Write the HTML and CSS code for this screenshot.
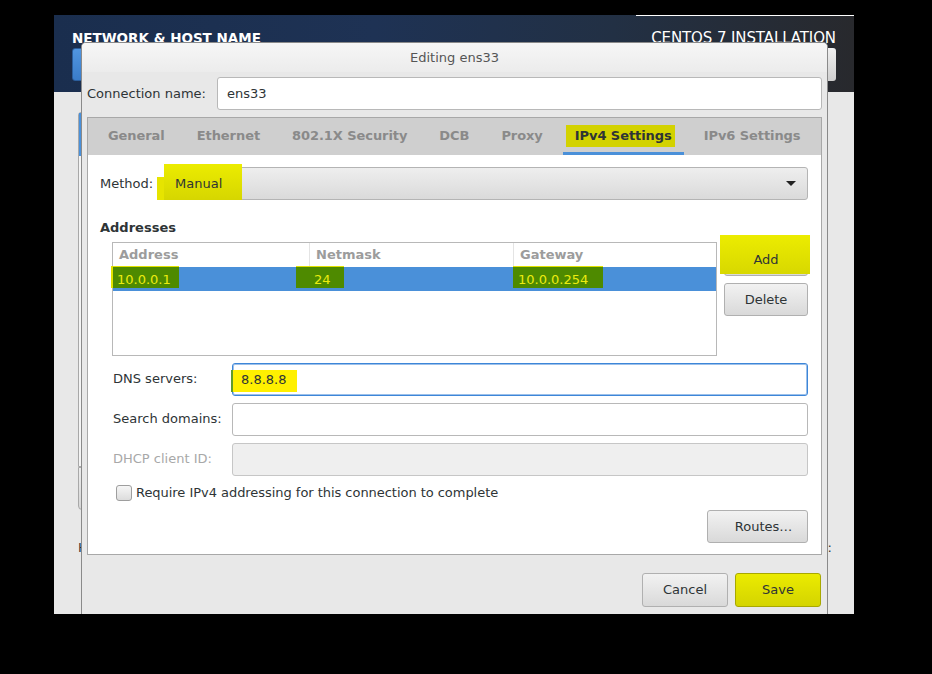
FILE: index.html
```html
<!DOCTYPE html>
<html lang="en">
  <head>
    <meta charset="UTF-8" />
    <meta name="viewport" content="width=device-width, initial-scale=1.0" />
    <title>Editing ens33</title>
    <link rel="stylesheet" href="styles.css">
  </head>
  <body>
    <div class="screen">
      <div class="topbar">
        <div class="spoke_head">
          <div class="spoke_title">NETWORK &amp; HOST NAME</div>
          <div class="done_btn"></div>
        </div>
        <div class="product">
          <div class="product_name">CENTOS 7 INSTALLATION</div>
          <div class="kb_btn"></div>
        </div>
      </div>

      <div class="spoke">
        <div class="device_list">
          <div class="device_sel"></div>
        </div>
        <div class="list_btn"></div>
        <div class="host_row">
          <span>Host name:</span>
          <span>Current host name:</span>
        </div>
      </div>

      <!-- dialog window sits over the spoke -->
      <div class="dialog">
        <div class="titlebar">Editing ens33</div>
        <div class="dlg_body">
          <div class="conn_row">
            <label>Connection name:</label>
            <div class="entry">ens33</div>
          </div>

          <div class="notebook">
            <ul class="tabs">
              <li class="tab">General</li>
              <li class="tab">Ethernet</li>
              <li class="tab">802.1X Security</li>
              <li class="tab">DCB</li>
              <li class="tab">Proxy</li>
              <li class="tab active"><span class="hl_tab">IPv4 Settings</span></li>
              <li class="tab">IPv6 Settings</li>
            </ul>

            <div class="tab_page">
              <div class="method_row">
                <label>Method:</label>
                <div class="combo">
                  <span class="hl_method">Manual</span>
                  <span class="arrow"></span>
                </div>
              </div>

              <h4 class="section_title">Addresses</h4>
              <div class="addr_block">
                <div class="addr_table">
                  <div class="thead">
                    <div class="th c1">Address</div>
                    <div class="th c2">Netmask</div>
                    <div class="th c3">Gateway</div>
                  </div>
                  <div class="trow selected">
                    <div class="c1"><span class="mk mk1">10.0.0.1</span></div>
                    <div class="c2"><span class="mk mk2">24</span></div>
                    <div class="c3"><span class="mk mk3">10.0.0.254</span></div>
                  </div>
                </div>
                <div class="addr_btns">
                  <button class="btn hl">Add</button>
                  <button class="btn">Delete</button>
                </div>
              </div>

              <div class="ip_fields">
                <label>DNS servers:</label>
                <div class="entry focus"><span class="hl_dns">8.8.8.8</span></div>
                <label>Search domains:</label>
                <div class="entry"></div>
                <label class="dim">DHCP client ID:</label>
                <div class="entry disabled"></div>
              </div>

              <div class="check_row">
                <span class="checkbox"></span>
                <span>Require IPv4 addressing for this connection to complete</span>
              </div>

              <div class="routes_row">
                <button class="btn routes">Routes…</button>
              </div>
            </div>
          </div>

          <div class="dlg_actions">
            <button class="btn">Cancel</button>
            <button class="btn save">Save</button>
          </div>
        </div>
      </div>
    </div>
  </body>
</html>
```

FILE: styles.css
```css
* {
  margin: 0;
  padding: 0;
  box-sizing: border-box;
}
li {
  list-style: none;
}
body {
  background: #000;
  width: 932px;
  height: 674px;
  overflow: hidden;
  font-family: "DejaVu Sans", "Liberation Sans", sans-serif;
  font-size: 13px;
  line-height: 16px;
  color: #2e3436;
}
button {
  font: inherit;
  color: inherit;
}

/* installer screen behind the dialog */
.screen {
  position: relative;
  width: 800px;
  height: 599px;
  margin: 15px 0 0 54px;
  background: #e8e8e8;
}
.topbar {
  position: relative;
  height: 77px;
  padding: 14px 18px 0;
  display: flex;
  justify-content: space-between;
  color: #fff;
  background: linear-gradient(90deg, #1a2e4e 0%, #1e3254 40%, #223044 70%, #28292d 100%);
}
.topbar::before {
  content: "";
  position: absolute;
  top: 0;
  right: 0;
  width: 218px;
  height: 1px;
  background: #fff;
}
.spoke_title {
  font-size: 13.5px;
  font-weight: bold;
  line-height: 18px;
}
.done_btn {
  width: 90px;
  height: 33px;
  margin-top: 1px;
  border-radius: 3px;
  border: 1px solid #2b5e9c;
  background: linear-gradient(#5196e0, #3a7cc8);
}
.product {
  display: flex;
  flex-direction: column;
  align-items: flex-end;
}
.product_name {
  font-size: 15px;
  line-height: 18px;
  letter-spacing: -0.1px;
}
.kb_btn {
  width: 70px;
  height: 33px;
  margin-top: 1px;
  border-radius: 3px;
  background: linear-gradient(#f0f0f0, #cfcfcf);
}
.spoke {
  height: 522px;
  padding: 20px 22px 0 24px;
}
.device_list {
  width: 300px;
  height: 355px;
  border: 1px solid #a8a8a8;
  border-radius: 3px 0 0 0;
  background: #f4f4f4;
}
.device_sel {
  height: 43px;
  background: #4a90d9;
}
.list_btn {
  width: 44px;
  height: 43px;
  border: 1px solid #a8a8a8;
  border-radius: 0 0 0 4px;
  background: linear-gradient(#ececec, #d6d6d6);
}
.host_row {
  margin-top: 30px;
  display: flex;
  justify-content: space-between;
}

/* dialog */
.dialog {
  position: absolute;
  left: 27px;
  top: 27px;
  width: 747px;
  height: 572px;
  display: flex;
  flex-direction: column;
  background: #e8e8e8;
  border: 1px solid #8a8a8a;
  border-bottom: 0;
  border-radius: 5px 5px 0 0;
}
.titlebar {
  height: 29px;
  line-height: 29px;
  text-align: center;
  color: #555;
  border-radius: 4px 4px 0 0;
  background: linear-gradient(#f6f6f6, #ececec);
}
.dlg_body {
  flex: 1;
  padding: 5px 5px 0;
}
.conn_row {
  display: flex;
  align-items: center;
  height: 33px;
}
.conn_row label {
  width: 130px;
}
.entry {
  flex: 1;
  height: 33px;
  padding-left: 9px;
  display: flex;
  align-items: center;
  background: #fff;
  border: 1px solid #b8b8b8;
  border-radius: 3px;
}
.entry.focus {
  padding-left: 8px;
  border-color: #3d86d8;
  box-shadow: inset 0 0 0 1px #9cc0ea;
}
.entry.disabled {
  background: #efefef;
  border-color: #c6c6c6;
}

.notebook {
  margin-top: 7px;
  height: 438px;
  display: flex;
  flex-direction: column;
  background: #fff;
  border: 1px solid #a8a8a8;
}
.tabs {
  height: 37px;
  padding-left: 8px;
  display: flex;
  gap: 8px;
  background: #cfcfcf;
}
.tab {
  padding: 0 12px;
  line-height: 35px;
  font-weight: bold;
  letter-spacing: -0.07px;
  color: #8a8a8a;
}
.tab.active {
  color: #2e3436;
  box-shadow: inset 0 -3px 0 #4a90d9;
}
.hl_tab {
  margin: 0 -3px 0 -9px;
  padding: 3px 3px 4px 9px;
  background: #d3d200;
}
.tab_page {
  flex: 1;
  padding: 12px 13px 0 12px;
}
.method_row {
  display: flex;
  align-items: center;
  height: 33px;
}
.method_row label {
  width: 64px;
}
.combo {
  flex: 1;
  height: 33px;
  padding: 0 11px 0 10px;
  display: flex;
  align-items: center;
  justify-content: space-between;
  border: 1px solid #b4b4b4;
  border-radius: 3px;
  background: linear-gradient(#eeeeee, #dadada);
}
.hl_method {
  position: relative;
  align-self: stretch;
  width: 78px;
  margin: -4px 0 -1px -11px;
  padding: 3px 0 0 11px;
  display: flex;
  align-items: center;
  background: linear-gradient(#ecec00, #d6d600);
}
.hl_method::before {
  content: "";
  position: absolute;
  left: -7px;
  top: 13px;
  bottom: 0;
  width: 7px;
  background: #e6e400;
}
.arrow {
  width: 0;
  height: 0;
  border-left: 5px solid transparent;
  border-right: 5px solid transparent;
  border-top: 5px solid #222;
}
.section_title {
  margin-top: 20px;
  font-size: 13px;
  line-height: 16px;
}
.addr_block {
  margin: 6px 0 0 12px;
  display: flex;
  gap: 7px;
}
.addr_table {
  flex: 1;
  height: 114px;
  background: #fff;
  border: 1px solid #b8b8b8;
}
.thead,
.trow {
  display: flex;
  height: 24px;
}
.th {
  padding-left: 6px;
  line-height: 24px;
  font-weight: bold;
  color: #9c9c9c;
  border-right: 1px solid #e4e4e4;
}
.th.c3 {
  border-right: 0;
}
.c1 {
  width: 197px;
}
.c2 {
  width: 204px;
}
.c3 {
  flex: 1;
}
.trow.selected {
  background: #4a90d9;
}
.mk {
  display: block;
  height: 22px;
  margin-top: -1px;
  line-height: 25px;
  color: #ecec10;
  background: #4e8a00;
  border-top: 1px solid #e2e200;
}
.mk1 {
  width: 68px;
  margin-left: -2px;
  padding-left: 4px;
  border-left: 2px solid #e2e200;
}
.mk2 {
  width: 48px;
  margin-left: -14px;
  padding-left: 18px;
}
.mk3 {
  width: 90px;
  margin-left: -1px;
  padding-left: 5px;
}
.addr_btns {
  width: 84px;
  padding-top: 1px;
  display: flex;
  flex-direction: column;
  gap: 7px;
}
.btn {
  height: 33px;
  border: 1px solid #b0b0b0;
  border-radius: 3px;
  background: linear-gradient(#f2f2f2, #d9d9d9);
}
.btn.hl {
  position: relative;
  z-index: 0;
}
.btn.hl::before {
  content: "";
  position: absolute;
  left: -5px;
  top: -9px;
  right: -3px;
  bottom: 1px;
  z-index: -1;
  background: linear-gradient(#ecec00, #d8d800);
}
.ip_fields {
  margin: 7px 0 0 13px;
  display: grid;
  grid-template-columns: 119px 1fr;
  row-gap: 7px;
  align-items: center;
}
.ip_fields label {
  margin-top: -1px;
}
.dim {
  color: #a8a8a8;
}
.hl_dns {
  width: 66px;
  height: 22px;
  margin: 3px 0 0 -10px;
  padding-left: 8px;
  line-height: 20px;
  background: #fff000;
  border-left: 2px solid #5e9a2e;
}
.check_row {
  margin: 9px 0 0 16px;
  height: 16px;
  display: flex;
  align-items: center;
  gap: 4px;
  letter-spacing: -0.04px;
}
.checkbox {
  width: 16px;
  height: 16px;
  border: 1px solid #9e9e9e;
  border-radius: 3px;
  background: linear-gradient(#f6f6f6, #dcdcdc);
}
.routes_row {
  margin-top: 9px;
  display: flex;
  justify-content: flex-end;
}
.btn.routes {
  width: 101px;
  padding-left: 12px;
}
.dlg_actions {
  margin-top: 18px;
  padding-right: 1px;
  display: flex;
  justify-content: flex-end;
  gap: 7px;
}
.dlg_actions .btn {
  width: 86px;
  height: 34px;
}
.btn.save {
  border-color: #a8a800;
  background: linear-gradient(#ebeb00, #d4d400);
}
```
